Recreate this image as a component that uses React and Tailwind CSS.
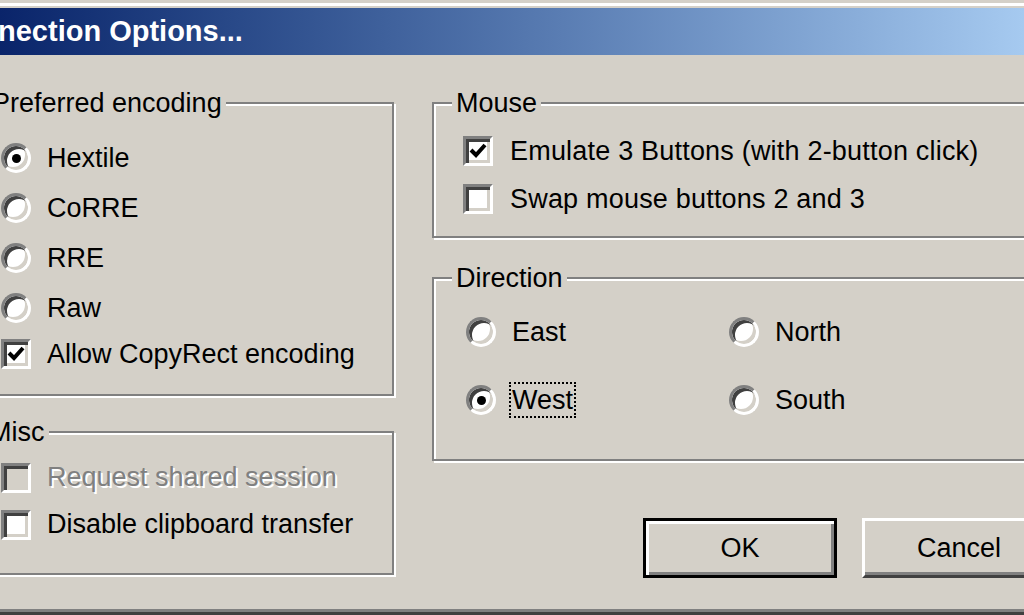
import React from 'react';

const font = { fontFamily: '"Liberation Sans", Arial, sans-serif' };

function Radio({ checked }) {
    return (
        <span className="relative flex h-[30px] w-[30px] shrink-0 items-center justify-center rounded-full border-[3px] border-t-[#808080] border-l-[#808080] border-b-white border-r-white bg-white shadow-[inset_3px_3px_0_#404040,inset_-3px_-3px_0_#d4d0c8]">
            {checked && <span className="h-[9px] w-[9px] rounded-full bg-black" />}
        </span>
    );
}

function Check({ checked, disabled }) {
    return (
        <span className={`flex h-[30px] w-[30px] shrink-0 items-center justify-center border-[3px] border-t-[#808080] border-l-[#808080] border-b-white border-r-white shadow-[inset_3px_3px_0_#404040,inset_-3px_-3px_0_#d4d0c8] ${disabled ? 'bg-[#d4d0c8]' : 'bg-white'}`}>
            {checked && (
                <svg width="20" height="20" viewBox="0 0 20 20">
                    <polyline points="3,9 8,14 17,4" fill="none" stroke="#000" strokeWidth="4" />
                </svg>
            )}
        </span>
    );
}

// etched group box, legend sits on the top line
function Group({ title, legendClass, className, bodyClass, children }) {
    return (
        <div className={`flex flex-col border-2 border-[#808080] shadow-[inset_2px_2px_0_#fff,2px_2px_0_#fff] ${className}`}>
            <span className={`-mt-[17px] self-start bg-[#d4d0c8] px-[4px] leading-[32px] ${legendClass}`}>{title}</span>
            <div className={`flex flex-col ${bodyClass}`}>{children}</div>
        </div>
    );
}

function Row({ h, children }) {
    return <div className={`flex items-center gap-[16px] ${h}`}>{children}</div>;
}

export default function App() {
    return (
        <div className="flex h-[615px] w-[1024px] flex-col overflow-hidden bg-[#d4d0c8] text-[27px] text-black" style={font}>
            <div className="h-[3px] bg-[#d4d0c8]" />
            <div className="h-[3px] bg-white" />
            <div className="h-[2px] bg-[#d4d0c8]" />
            <div className="flex h-[47px] items-center bg-gradient-to-r from-[#0a246a] to-[#a6caf0]">
                <span className="-ml-[2px] text-[29px] font-bold whitespace-nowrap text-white">nection Options...</span>
            </div>

            <div className="flex flex-1 gap-[38px]">
                {/* left column */}
                <div className="-ml-[30px] flex w-[424px] shrink-0 flex-col">
                    <Group title="Preferred encoding" legendClass="ml-[16px]" className="mt-[47px] pb-[19px]" bodyClass="pt-[14px] pl-[29px]">
                        <Row h="h-[50px]"><Radio checked /><span>Hextile</span></Row>
                        <Row h="h-[50px]"><Radio /><span>CoRRE</span></Row>
                        <Row h="h-[50px]"><Radio /><span>RRE</span></Row>
                        <Row h="h-[50px]"><Radio /><span>Raw</span></Row>
                        <Row h="h-[42px]"><Check checked /><span>Allow CopyRect encoding</span></Row>
                    </Group>
                    <Group title="Misc" legendClass="ml-[13px]" className="mt-[35px] pb-[25px]" bodyClass="pt-[6px] pl-[29px]">
                        <Row h="h-[47px]">
                            <Check disabled />
                            <span className="text-[#808080] [text-shadow:2px_2px_0_#fff]">Request shared session</span>
                        </Row>
                        <Row h="h-[47px]"><Check /><span>Disable clipboard transfer</span></Row>
                    </Group>
                </div>

                {/* right column */}
                <div className="flex w-[640px] shrink-0 flex-col">
                    <Group title="Mouse" legendClass="ml-[18px]" className="mt-[47px] pb-[13px]" bodyClass="pt-[8px] pl-[29px]">
                        <Row h="h-[48px]"><Check checked /><span className="ml-[1px] tracking-[0.2px]">Emulate 3 Buttons (with 2-button click)</span></Row>
                        <Row h="h-[48px]"><Check /><span className="ml-[1px] tracking-[0.2px]">Swap mouse buttons 2 and 3</span></Row>
                    </Group>
                    <Group title="Direction" legendClass="ml-[18px]" className="mt-[39px] pb-[25px]" bodyClass="pt-[4px] pl-[32px]">
                        <div className="grid grid-cols-[263px_1fr] grid-rows-[68px_68px]">
                            <Row h="h-[68px]"><Radio /><span>East</span></Row>
                            <Row h="h-[68px]"><Radio /><span>North</span></Row>
                            <Row h="h-[68px]">
                                <Radio checked />
                                <span className="-ml-[3px] border-2 border-dotted border-black px-[1px] leading-[32px]">West</span>
                            </Row>
                            <Row h="h-[68px]"><Radio /><span>South</span></Row>
                        </div>
                    </Group>
                    <div className="ml-[211px] mt-[57px] flex gap-[25px]">
                        <button className="h-[60px] w-[194px] border-[3px] border-black bg-[#d4d0c8] shadow-[inset_3px_3px_0_#fff,inset_-3px_-3px_0_#808080]">
                            OK
                        </button>
                        <button className="h-[60px] w-[194px] border-[3px] border-t-white border-l-white border-b-[#404040] border-r-[#404040] bg-[#d4d0c8] shadow-[inset_-3px_-3px_0_#808080]">
                            Cancel
                        </button>
                    </div>
                </div>
            </div>

            <div className="h-[3px] bg-[#808080]" />
            <div className="h-[3px] bg-[#404040]" />
        </div>
    );
}
